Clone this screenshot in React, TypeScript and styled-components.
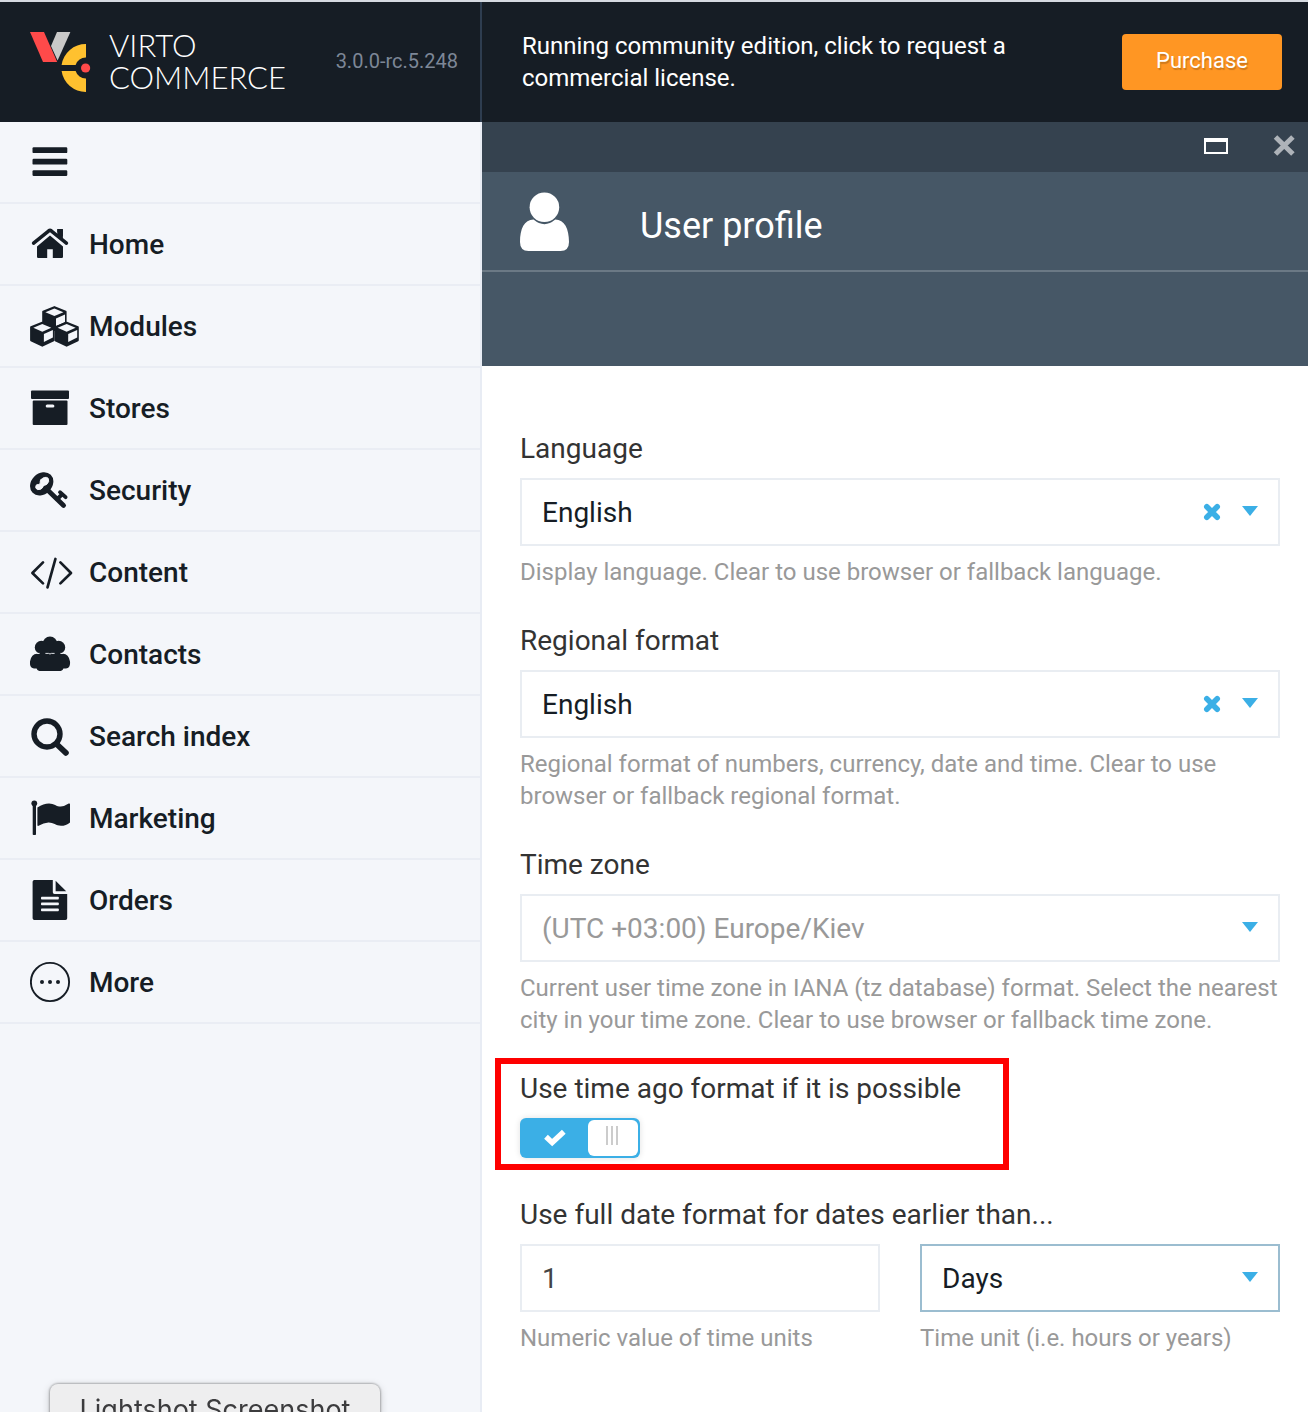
import React, { useState } from "react";
import styled, { createGlobalStyle } from "styled-components";

const ink = "#161d25";
const accent = "#3bafe6";
const navBg = "#f4f6fa";

const GlobalStyle = createGlobalStyle`
  *, *::before, *::after { box-sizing: border-box; }
  body {
    margin: 0;
    background: #fff;
    font-family: Roboto, "Liberation Sans", sans-serif;
    -webkit-font-smoothing: antialiased;
  }
  button, input, select { font-family: inherit; }
`;

const Page = styled.div`
  display: flex;
  flex-direction: column;
  min-height: 100vh;
  border-top: 2px solid #d5dae1;
`;

const TopBar = styled.header`
  display: flex;
  height: 120px;
  background: ${ink};
`;

const Brand = styled.div`
  display: flex;
  align-items: center;
  flex: 0 0 482px;
  padding: 0 22px 0 30px;
  border-right: 2px solid #2e3d50;
`;

const BrandLink = styled.a`
  display: flex;
  align-items: center;
  gap: 17px;
  color: #fff;
  text-decoration: none;
`;

const BrandName = styled.span`
  display: flex;
  flex-direction: column;
  padding-bottom: 2px;
  font: 300 31px/32px Lato, sans-serif;
`;

const Version = styled.span`
  margin-left: auto;
  padding-bottom: 2px;
  font-size: 20px;
  color: #7d8797;
`;

const License = styled.div`
  display: flex;
  flex: 1;
  align-items: center;
  justify-content: space-between;
  gap: 40px;
  padding: 0 26px 0 40px;
`;

const LicenseText = styled.p`
  max-width: 520px;
  margin: 0;
  font-size: 24px;
  line-height: 32px;
  color: #fff;
`;

const PurchaseButton = styled.button`
  flex: none;
  width: 160px;
  height: 56px;
  padding: 0 0 4px;
  border: 0;
  border-radius: 4px;
  background: #ff9623;
  color: #fff;
  font-size: 22px;
  text-shadow: 1px 2px 1px rgba(0, 0, 0, 0.2);
`;

const Body = styled.div`
  display: flex;
  flex: 1;
`;

const Nav = styled.nav`
  flex: 0 0 482px;
  border-right: 2px solid #e8ecf4;
  background: ${navBg};
`;

const NavList = styled.ul`
  margin: 0;
  padding: 0;
  list-style: none;
`;

const NavRow = styled.li`
  height: 82px;
  border-bottom: 2px solid #eaedf4;
`;

const NavLink = styled.a`
  display: flex;
  align-items: center;
  gap: 9px;
  height: 80px;
  padding-left: 30px;
  color: ${ink};
  font-size: 28px;
  font-weight: 500;
  text-decoration: none;
`;

const MenuButton = styled.button`
  display: flex;
  align-items: center;
  height: 80px;
  padding: 0 30px;
  border: 0;
  background: none;
  color: ${ink};
`;

const Blade = styled.main`
  flex: 1;
  min-width: 0;
  background: #fff;
`;

const WindowBar = styled.div`
  display: flex;
  align-items: center;
  justify-content: flex-end;
  gap: 44px;
  height: 50px;
  padding: 0 12px 2px;
  background: #35424f;
`;

const WindowButton = styled.button`
  display: flex;
  padding: 0;
  border: 0;
  background: none;
`;

const BladeHead = styled.div`
  display: flex;
  align-items: center;
  gap: 70px;
  height: 100px;
  padding: 2px 0 0 38px;
  border-bottom: 2px solid #6b7985;
  background: #465766;
`;

const BladeTitle = styled.h1`
  margin: 0;
  padding-top: 8px;
  font-size: 36px;
  font-weight: 400;
  line-height: 44px;
  color: #fff;
`;

const BladeTools = styled.div`
  height: 94px;
  background: #465766;
`;

const Form = styled.form`
  display: flex;
  flex-direction: column;
  gap: 36px;
  padding: 66px 28px 58px 38px;
`;

const Field = styled.div`
  position: relative;
`;

const SwitchField = styled(Field)`
  padding-bottom: 4px;
`;

const Label = styled.label`
  display: block;
  margin-bottom: 12px;
  font-size: 28px;
  line-height: 34px;
  color: #333;
`;

const Help = styled.p`
  margin: 10px 0 0;
  font-size: 24px;
  line-height: 32px;
  color: #999;
`;

const Control = styled.div`
  position: relative;
`;

const Select = styled.select<{ $muted?: boolean; $active?: boolean }>`
  display: block;
  width: 100%;
  height: 68px;
  padding: 0 100px 0 20px;
  border: 2px solid ${(p) => (p.$active ? "#9bbdd0" : "#e9edf2")};
  border-radius: 0;
  appearance: none;
  background: #fff;
  color: ${(p) => (p.$muted ? "#999" : ink)};
  font-size: 28px;
`;

const NumberInput = styled.input`
  display: block;
  width: 100%;
  height: 68px;
  padding: 0 20px;
  border: 2px solid #e9edf2;
  background: #fff;
  color: #444;
  font-size: 28px;
`;

const Caret = styled.span`
  position: absolute;
  top: 28px;
  right: 22px;
  border: 8px solid transparent;
  border-top: 10px solid ${accent};
  border-bottom: 0;
  pointer-events: none;
`;

const ClearButton = styled.button`
  position: absolute;
  top: 25px;
  right: 59px;
  display: flex;
  padding: 0;
  border: 0;
  background: none;
`;

const Columns = styled.div`
  display: grid;
  grid-template-columns: 1fr 1fr;
  gap: 40px;
`;

const Highlight = styled.div`
  position: absolute;
  top: -14px;
  bottom: -8px;
  left: -25px;
  width: 514px;
  border: 6px solid #fe0000;
  pointer-events: none;
`;

const Switch = styled.div`
  position: relative;
  display: flex;
  align-items: center;
  justify-content: space-between;
  width: 120px;
  height: 40px;
  padding: 2px 2px 2px 24px;
  border-radius: 6px;
  background: ${accent};
  box-shadow: 0 0 6px rgba(0, 0, 0, 0.12);
`;

const SwitchInput = styled.input`
  position: absolute;
  inset: 0;
  width: 100%;
  height: 100%;
  margin: 0;
  opacity: 0;
`;

const Knob = styled.span`
  display: flex;
  justify-content: center;
  gap: 3px;
  width: 50px;
  height: 36px;
  padding: 6px 2px 11px 0;
  border-radius: 6px;
  background: #fff;
`;

const Grip = styled.span`
  width: 2px;
  background: #ccc;
`;

const DockClip = styled.div`
  position: fixed;
  bottom: 0;
  left: 40px;
  height: 38px;
  padding: 10px 10px 0;
  overflow: hidden;
`;

const DockTooltip = styled.div`
  width: 330px;
  height: 52px;
  border-radius: 8px;
  background: #eeeeef;
  box-shadow: 0 0 2px 1px rgba(0, 0, 0, 0.25), 0 2px 8px rgba(0, 0, 0, 0.2);
  color: #3c3c3e;
  font: 400 27px/52px Inter, sans-serif;
  text-align: center;
`;

const cube = (cx: number, t: number) => (
  <g key={`${cx}-${t}`}>
    <path
      d={`M${cx} ${t}l11.2 4.6v13l-11.2 5.4l-11.2-5.4v-13z`}
      fill={ink}
      stroke={ink}
      strokeWidth="2"
      strokeLinejoin="round"
    />
    <path d={`M${cx} ${t + 1.4}l9 3.7l-9 3.9l-9-3.9z`} fill={navBg} />
    <path d={`M${cx + 1.6} ${t + 11.4}l9-4v7.4l-9 4.4z`} fill={navBg} />
  </g>
);

const glyphs: Record<string, React.ReactNode> = {
  menu: (
    <g fill={ink}>
      <rect x="2.5" y="7.3" width="34.8" height="5.8" rx="1.2" />
      <rect x="2.5" y="18.8" width="34.8" height="5.8" rx="1.2" />
      <rect x="2.5" y="30.2" width="34.8" height="5.8" rx="1.2" />
    </g>
  ),
  home: (
    <g fill={ink}>
      <path d="M20 13.5L33 24.4V34.8Q33 36 31.8 36H22.8V27.2H17.2V36H8.2Q7 36 7 34.8V24.4z" />
      <path d="M27.3 7.6Q27.3 7 28 7H32.2Q32.9 7 32.9 7.6V20L27.3 15z" />
      <path
        d="M3.6 21.4L18.8 9Q20 8.1 21.2 9L36.4 21.4"
        fill="none"
        stroke={navBg}
        strokeWidth="6"
      />
      <path d="M27.3 7.6Q27.3 7 28 7H32.2Q32.9 7 32.9 7.6V18L27.3 13z" />
      <path
        d="M3.6 21.2L18.8 8.8Q20 7.9 21.2 8.8L36.4 21.2"
        fill="none"
        stroke={ink}
        strokeWidth="3.6"
        strokeLinecap="round"
      />
    </g>
  ),
  modules: <g>{[cube(24.4, 3.1), cube(12.3, 18.7), cube(36.6, 18.7)]}</g>,
  stores: (
    <g fill={ink}>
      <rect x="1" y="4.4" width="38" height="8.6" rx="1" />
      <rect x="2.7" y="14.6" width="34.8" height="24.3" rx="1" />
      <rect x="15.7" y="18.6" width="8.7" height="3" rx="1.5" fill={navBg} />
    </g>
  ),
  security: (
    <g stroke={ink} strokeLinecap="round" fill="none">
      <ellipse cx="11.7" cy="15.8" rx="12.8" ry="10.4" fill={ink} stroke="none" transform="rotate(-45 11.7 15.8)" />
      <path
        d="M11 11.6Q15 7.8 18.1 10.2Q20 13.4 16.7 16.4Q15 17.4 13.6 18.6Q11 22.4 7.4 21.6Q4.9 20.4 6 17.4Q7.2 16.2 8.8 16.4Q10.6 16.2 10.2 14.2Q9.9 12.8 11 11.6z"
        fill={navBg}
        stroke={navBg}
        strokeWidth="1"
      />
      <path d="M15.5 20L33.6 37.4" strokeWidth="4.8" />
      <path d="M27.3 31L31.8 26.6" strokeWidth="4" />
      <path d="M30 24.2L35.6 29.2" strokeWidth="3.8" />
    </g>
  ),
  content: (
    <path
      d="M13 12.4L2.4 23L13 33.4M25.4 9L17.5 37.4M30.4 12.4L41 23L30.4 33.4"
      fill="none"
      stroke={ink}
      strokeWidth="2.7"
      strokeLinecap="round"
      strokeLinejoin="round"
    />
  ),
  contacts: (
    <g fill={ink}>
      <circle cx="20" cy="12" r="7.4" />
      <circle cx="11.4" cy="15.4" r="6.6" />
      <circle cx="28.6" cy="15.4" r="6.6" />
      <rect x="9" y="13" width="22" height="14" />
      <path d="M7 21.8H33Q38.6 21.8 40 29.5Q40.6 36.4 36 36.4H33.4Q32.4 39 29 39H11Q7.6 39 6.6 36.4H4Q-.6 36.4 0 29.5Q1.4 21.8 7 21.8z" />
      <path d="M15.4 21.4H18.6Q20 22.6 21.4 21.4H24.6" stroke={navBg} strokeWidth=".9" fill="none" />
      <path d="M6.8 21.4H9.6M30.4 21.4H33.2" stroke={navBg} strokeWidth="1" />
    </g>
  ),
  search: (
    <g fill="none" stroke={ink}>
      <circle cx="17" cy="20" r="13" strokeWidth="5.4" />
      <path d="M26.5 30L35.9 38.8" strokeWidth="5.8" strokeLinecap="round" />
    </g>
  ),
  marketing: (
    <g fill={ink}>
      <circle cx="4.3" cy="7.3" r="2.9" />
      <rect x="2.7" y="8" width="3.3" height="31" rx=".8" />
      <path d="M7.4 11.4Q13.5 7.4 19 7.4C24 7.4 26.5 10.6 30.8 10.6Q34.5 10.4 38.7 7.6Q40 7 40 8.2V26.4Q36 29.8 31 29.8C26 29.8 23 26.4 18.4 26.6Q13.6 26.8 8.6 29.8Q7.4 30.3 7.4 29z" />
    </g>
  ),
  orders: (
    <g fill={ink}>
      <path d="M4.4 2H22.8V14.3Q22.8 16 24.5 16H37.2V40.2Q37.2 42 35.4 42H4.4Q2.6 42 2.6 40.2V3.8Q2.6 2 4.4 2z" />
      <path d="M25.6 2.8L36.2 13.2H25.6z" />
      <g fill={navBg}>
        <rect x="11" y="18.8" width="17.8" height="2.8" rx=".8" />
        <rect x="11" y="24.5" width="17.8" height="2.8" rx=".8" />
        <rect x="11" y="30.4" width="17.8" height="2.8" rx=".8" />
      </g>
    </g>
  ),
  more: (
    <g fill={ink}>
      <circle cx="20" cy="22" r="19.1" fill="none" stroke={ink} strokeWidth="1.9" />
      <circle cx="12" cy="22" r="2" />
      <circle cx="20" cy="22" r="2" />
      <circle cx="28" cy="22" r="2" />
    </g>
  ),
};

const Glyph = ({ name }: { name: string }) => (
  <svg width="50" height="44" viewBox="0 0 50 44" aria-hidden="true">
    {glyphs[name]}
  </svg>
);

const LogoMark = () => (
  <svg width="62" height="62" viewBox="30 31 62 62" aria-hidden="true">
    <path d="M57 32H70.4L57.6 60.4L51 46z" fill="#c9c9c9" />
    <path d="M30 32H44L57.2 62H43z" fill="#ff4a4a" />
    <path d="M86 44V57.6A10.6 10.6 0 0 0 75.6 65H61.6A24.4 24.4 0 0 1 86 44z" fill="#ffc12f" />
    <path d="M86 92V78.4A10.6 10.6 0 0 1 75.6 71H61.6A24.4 24.4 0 0 0 86 92z" fill="#ffc12f" />
    <circle cx="85.6" cy="68" r="4.6" fill="#ff4a4a" />
  </svg>
);

const UserIcon = () => (
  <svg width="50" height="60" viewBox="0 0 50 60" aria-hidden="true" fill="#fff">
    <circle cx="24.4" cy="15.3" r="14.8" />
    <path d="M13.5 27.6Q24.4 36.8 35.3 27.6C44.5 27.6 49 37 49 50Q49 59 40.5 59H8.5Q0 59 0 50C0 37 4.3 27.6 13.5 27.6z" />
  </svg>
);

const navItems = [
  ["home", "Home"],
  ["modules", "Modules"],
  ["stores", "Stores"],
  ["security", "Security"],
  ["content", "Content"],
  ["contacts", "Contacts"],
  ["search", "Search index"],
  ["marketing", "Marketing"],
  ["orders", "Orders"],
  ["more", "More"],
];

interface SelectFieldProps {
  id: string;
  label: string;
  value: string;
  help: string;
  clearable?: boolean;
}

const SelectField = ({ id, label, value, help, clearable }: SelectFieldProps) => (
  <Field>
    <Label htmlFor={id}>{label}</Label>
    <Control>
      <Select id={id} $muted={!clearable}>
        <option>{value}</option>
      </Select>
      {clearable && (
        <ClearButton type="button" aria-label={`Clear ${label}`}>
          <svg width="18" height="18" viewBox="0 0 18 18" aria-hidden="true">
            <path d="M3.8 3.8L14.2 14.2M14.2 3.8L3.8 14.2" stroke={accent} strokeWidth="5.6" strokeLinecap="round" />
          </svg>
        </ClearButton>
      )}
      <Caret />
    </Control>
    <Help>{help}</Help>
  </Field>
);

export default function App() {
  const [timeAgo, setTimeAgo] = useState(true);
  const [amount, setAmount] = useState("1");

  return (
    <Page>
      <GlobalStyle />
      <TopBar>
        <Brand>
          <BrandLink href="#">
            <LogoMark />
            <BrandName>
              <span>VIRTO</span>
              <span>COMMERCE</span>
            </BrandName>
          </BrandLink>
          <Version>3.0.0-rc.5.248</Version>
        </Brand>
        <License>
          <LicenseText>Running community edition, click to request a commercial license.</LicenseText>
          <PurchaseButton type="button">Purchase</PurchaseButton>
        </License>
      </TopBar>
      <Body>
        <Nav>
          <NavList>
            <NavRow>
              <MenuButton type="button" aria-label="Toggle menu">
                <Glyph name="menu" />
              </MenuButton>
            </NavRow>
            {navItems.map(([icon, text]) => (
              <NavRow key={icon}>
                <NavLink href="#">
                  <Glyph name={icon} />
                  {text}
                </NavLink>
              </NavRow>
            ))}
          </NavList>
        </Nav>
        <Blade>
          <WindowBar>
            <WindowButton type="button" aria-label="Maximize">
              <svg width="24" height="16" viewBox="0 0 24 16" aria-hidden="true">
                <path d="M0 0H24V16H0zM2 4V14H22V4z" fill="#fff" fillRule="evenodd" />
              </svg>
            </WindowButton>
            <WindowButton type="button" aria-label="Close">
              <svg width="24" height="24" viewBox="0 0 24 24" aria-hidden="true">
                <path
                  d="M3.5 3L20.9 20M20.9 3L3.5 20"
                  stroke="#aeb3b9"
                  strokeWidth="5"
                />
              </svg>
            </WindowButton>
          </WindowBar>
          <BladeHead>
            <UserIcon />
            <BladeTitle>User profile</BladeTitle>
          </BladeHead>
          <BladeTools />
          <Form>
            <SelectField
              id="language"
              label="Language"
              value="English"
              help="Display language. Clear to use browser or fallback language."
              clearable
            />
            <SelectField
              id="regional"
              label="Regional format"
              value="English"
              help="Regional format of numbers, currency, date and time. Clear to use browser or fallback regional format."
              clearable
            />
            <SelectField
              id="timezone"
              label="Time zone"
              value="(UTC +03:00) Europe/Kiev"
              help="Current user time zone in IANA (tz database) format. Select the nearest city in your time zone. Clear to use browser or fallback time zone."
            />
            <SwitchField>
              <Label htmlFor="timeago">Use time ago format if it is possible</Label>
              <Switch>
                <svg width="22" height="18" viewBox="0 0 22 18" aria-hidden="true">
                  <path d="M2 7.8L8.2 13.6L19.8 2.8" fill="none" stroke="#fff" strokeWidth="5.4" />
                </svg>
                <Knob>
                  <Grip />
                  <Grip />
                  <Grip />
                </Knob>
                <SwitchInput
                  id="timeago"
                  type="checkbox"
                  role="switch"
                  checked={timeAgo}
                  onChange={(e) => setTimeAgo(e.target.checked)}
                />
              </Switch>
              <Highlight />
            </SwitchField>
            <Field>
              <Label htmlFor="amount">Use full date format for dates earlier than...</Label>
              <Columns>
                <div>
                  <NumberInput
                    id="amount"
                    inputMode="numeric"
                    value={amount}
                    onChange={(e) => setAmount(e.target.value)}
                  />
                  <Help>Numeric value of time units</Help>
                </div>
                <div>
                  <Control>
                    <Select aria-label="Time unit" $active>
                      <option>Days</option>
                    </Select>
                    <Caret />
                  </Control>
                  <Help>Time unit (i.e. hours or years)</Help>
                </div>
              </Columns>
            </Field>
          </Form>
        </Blade>
      </Body>
      <DockClip>
        <DockTooltip>Lightshot Screenshot</DockTooltip>
      </DockClip>
    </Page>
  );
}
